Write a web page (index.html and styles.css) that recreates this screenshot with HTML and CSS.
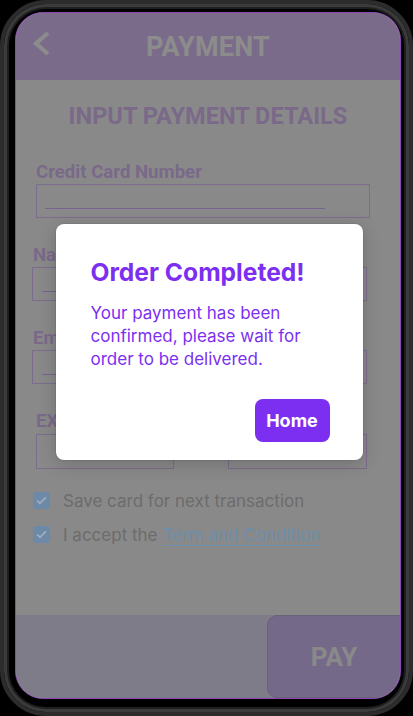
FILE: index.html
```html
<!DOCTYPE html>
<html lang="en">
<head>
<meta charset="utf-8">
<title>Payment</title>
<link rel="stylesheet" href="styles.css">
</head>
<body>
<div class="phone">
  <div class="screen">
    <header class="topbar">
      <svg class="back" width="20" height="28" viewBox="0 0 20 28" aria-hidden="true">
        <polyline points="17,3 5,13.5 17,24" fill="none" stroke="#a0a0a0" stroke-width="4.2" stroke-linejoin="miter"/>
      </svg>
      <h1 class="topbar-title">PAYMENT</h1>
      <span class="spacer"></span>
    </header>

    <main class="content">
      <h2 class="page-title">INPUT PAYMENT DETAILS</h2>

      <div class="field field-card">
        <label class="field-label">Credit Card Number</label>
        <div class="box"><span class="line line-card"></span></div>
      </div>

      <div class="field field-wide">
        <label class="field-label">Name on Card</label>
        <div class="box"><span class="line line-wide"></span></div>
      </div>

      <div class="field field-wide">
        <label class="field-label">Email</label>
        <div class="box"><span class="line line-wide"></span></div>
      </div>

      <div class="field-row">
        <div class="field field-half">
          <label class="field-label">EXP Date</label>
          <div class="box box-half"></div>
        </div>
        <div class="field field-half">
          <label class="field-label">CVV</label>
          <div class="box box-half"></div>
        </div>
      </div>

      <div class="checks">
        <div class="check">
          <span class="tick"><svg width="11" height="9" viewBox="0 0 11 9"><polyline points="1.2,4.6 4,7.3 9.8,1.4" fill="none" stroke="#b7c6d6" stroke-width="1.8"/></svg></span>
          <span class="check-text">Save card for next transaction</span>
        </div>
        <div class="check">
          <span class="tick"><svg width="11" height="9" viewBox="0 0 11 9"><polyline points="1.2,4.6 4,7.3 9.8,1.4" fill="none" stroke="#b7c6d6" stroke-width="1.8"/></svg></span>
          <span class="check-text">I accept the <a class="link" href="#">Term and Condition</a></span>
        </div>
      </div>
    </main>

    <footer class="paybar">
      <button class="pay">PAY</button>
    </footer>

    <div class="backdrop">
      <div class="modal">
        <h3 class="modal-title">Order Completed!</h3>
        <p class="modal-text">Your payment has been confirmed, please wait for order to be delivered.</p>
        <div class="modal-actions">
          <button class="home">Home</button>
        </div>
      </div>
    </div>
  </div>
</div>
</body>
</html>
```

FILE: styles.css
```css
* { box-sizing: border-box; }

html, body {
  margin: 0;
  padding: 0;
  background: #000;
}

.phone {
  width: 413px;
  height: 716px;
  border-radius: 46px;
  background: #000;
  border: 4px solid #2c2c2c;
  box-shadow: inset 0 0 0 3px #3b3b3b, inset 0 0 0 5px #1f1f1f;
  padding: 8px 8px 13px 11px;
}

.screen {
  position: relative;
  width: 386px;
  height: 687px;
  border: 1px solid #8b45b5;
  border-radius: 28px;
  overflow: hidden;
  display: flex;
  flex-direction: column;
  background: #9d9d9d;
  font-family: Roboto, "Liberation Sans", sans-serif;
}

.topbar {
  height: 67px;
  flex: none;
  background: #8c7a9e;
  display: grid;
  grid-template-columns: 1fr auto 1fr;
  align-items: center;
}

.back {
  margin-left: 15px;
  margin-top: -5px;
  display: block;
}

.topbar-title {
  margin: 0;
  font-size: 27px;
  font-weight: 700;
  color: #a0a0a0;
  letter-spacing: 0.2px;
}

.content {
  flex: 1;
  padding-top: 22px;
}

.page-title {
  margin: 0;
  text-align: center;
  font-size: 23.6px;
  line-height: 28px;
  font-weight: 700;
  color: #8b789d;
}

.field-label {
  display: block;
  font-size: 18.6px;
  line-height: 22px;
  font-weight: 700;
  color: #8b789d;
}

.box {
  border: 1px solid #8e7ba1;
  height: 34px;
  padding: 0 0 8px 8px;
  display: flex;
  align-items: flex-end;
}

.line {
  display: block;
  height: 24px;
  border-bottom: 1px solid #8a6fa6;
}

.field-card {
  margin: 31px 0 0 20px;
  width: 334px;
}
.field-card .box { margin-top: 1px; }
.line-card { width: 280px; }

.field-wide {
  margin: 26px 0 0 16px;
  width: 335px;
}
.field-wide .field-label { padding-left: 1px; }
.field-wide .box { margin-top: 1px; padding-left: 9px; }
.line-wide { width: 300px; }

.field-row {
  margin: 26px 0 0 20px;
  display: flex;
  gap: 54px;
}

.field-half { width: 138px; }
.field-half + .field-half { width: 139px; }
.box-half { margin-top: 2px; height: 35px; }

.checks {
  margin: 21px 0 0 17px;
  display: flex;
  flex-direction: column;
  gap: 13px;
  font-family: Inter, "Noto Sans", sans-serif;
  font-size: 17px;
  color: #7b7b7b;
}

.check {
  display: flex;
  align-items: center;
  gap: 13px;
  height: 21px;
}

.check-text {
  white-space: nowrap;
}

.tick {
  width: 17px;
  height: 17px;
  border-radius: 3px;
  background: #7c9dc0;
  display: flex;
  align-items: center;
  justify-content: center;
  flex: none;
}

.link {
  color: #7ba2c6;
  text-decoration: underline;
  text-decoration-color: #7ba2c6;
  text-underline-offset: 4px;
  text-decoration-thickness: 1px;
}

.paybar {
  flex: none;
  height: 83px;
  background: #918e9c;
  display: flex;
  justify-content: flex-end;
}

.pay {
  width: 134px;
  height: 100%;
  margin-right: -1px;
  border: 1px solid #7a6f8a;
  border-radius: 10px 0 0 10px;
  background: #86789d;
  color: #9d9d9d;
  font-family: Roboto, "Liberation Sans", sans-serif;
  font-size: 26px;
  font-weight: 700;
  padding: 0;
}

.backdrop {
  position: absolute;
  inset: 0;
  background: rgba(0, 0, 0, 0.12);
  display: flex;
  justify-content: center;
  align-items: flex-start;
  padding-top: 211px;
  padding-left: 2px;
}

.modal {
  width: 307px;
  background: #fff;
  border-radius: 8px;
  padding: 33px 33px 18px 35px;
  box-shadow: 0 0 0 1px rgba(0, 0, 0, 0.06), 0 4px 18px rgba(0, 0, 0, 0.18);
  font-family: Inter, "Noto Sans", sans-serif;
  color: #7c2ff0;
}

.modal-title {
  margin: 0;
  font-size: 24.6px;
  line-height: 30px;
  font-weight: 700;
}

.modal-text {
  margin: 15px 0 0;
  font-size: 17px;
  line-height: 23px;
  font-weight: 400;
}

.modal-actions {
  margin-top: 28px;
  display: flex;
  justify-content: flex-end;
}

.home {
  width: 75px;
  height: 43px;
  border: 0;
  border-radius: 8px;
  background: #7c2ff0;
  color: #fff;
  font-family: Inter, "Noto Sans", sans-serif;
  font-size: 18px;
  font-weight: 700;
  padding: 0;
}
```
